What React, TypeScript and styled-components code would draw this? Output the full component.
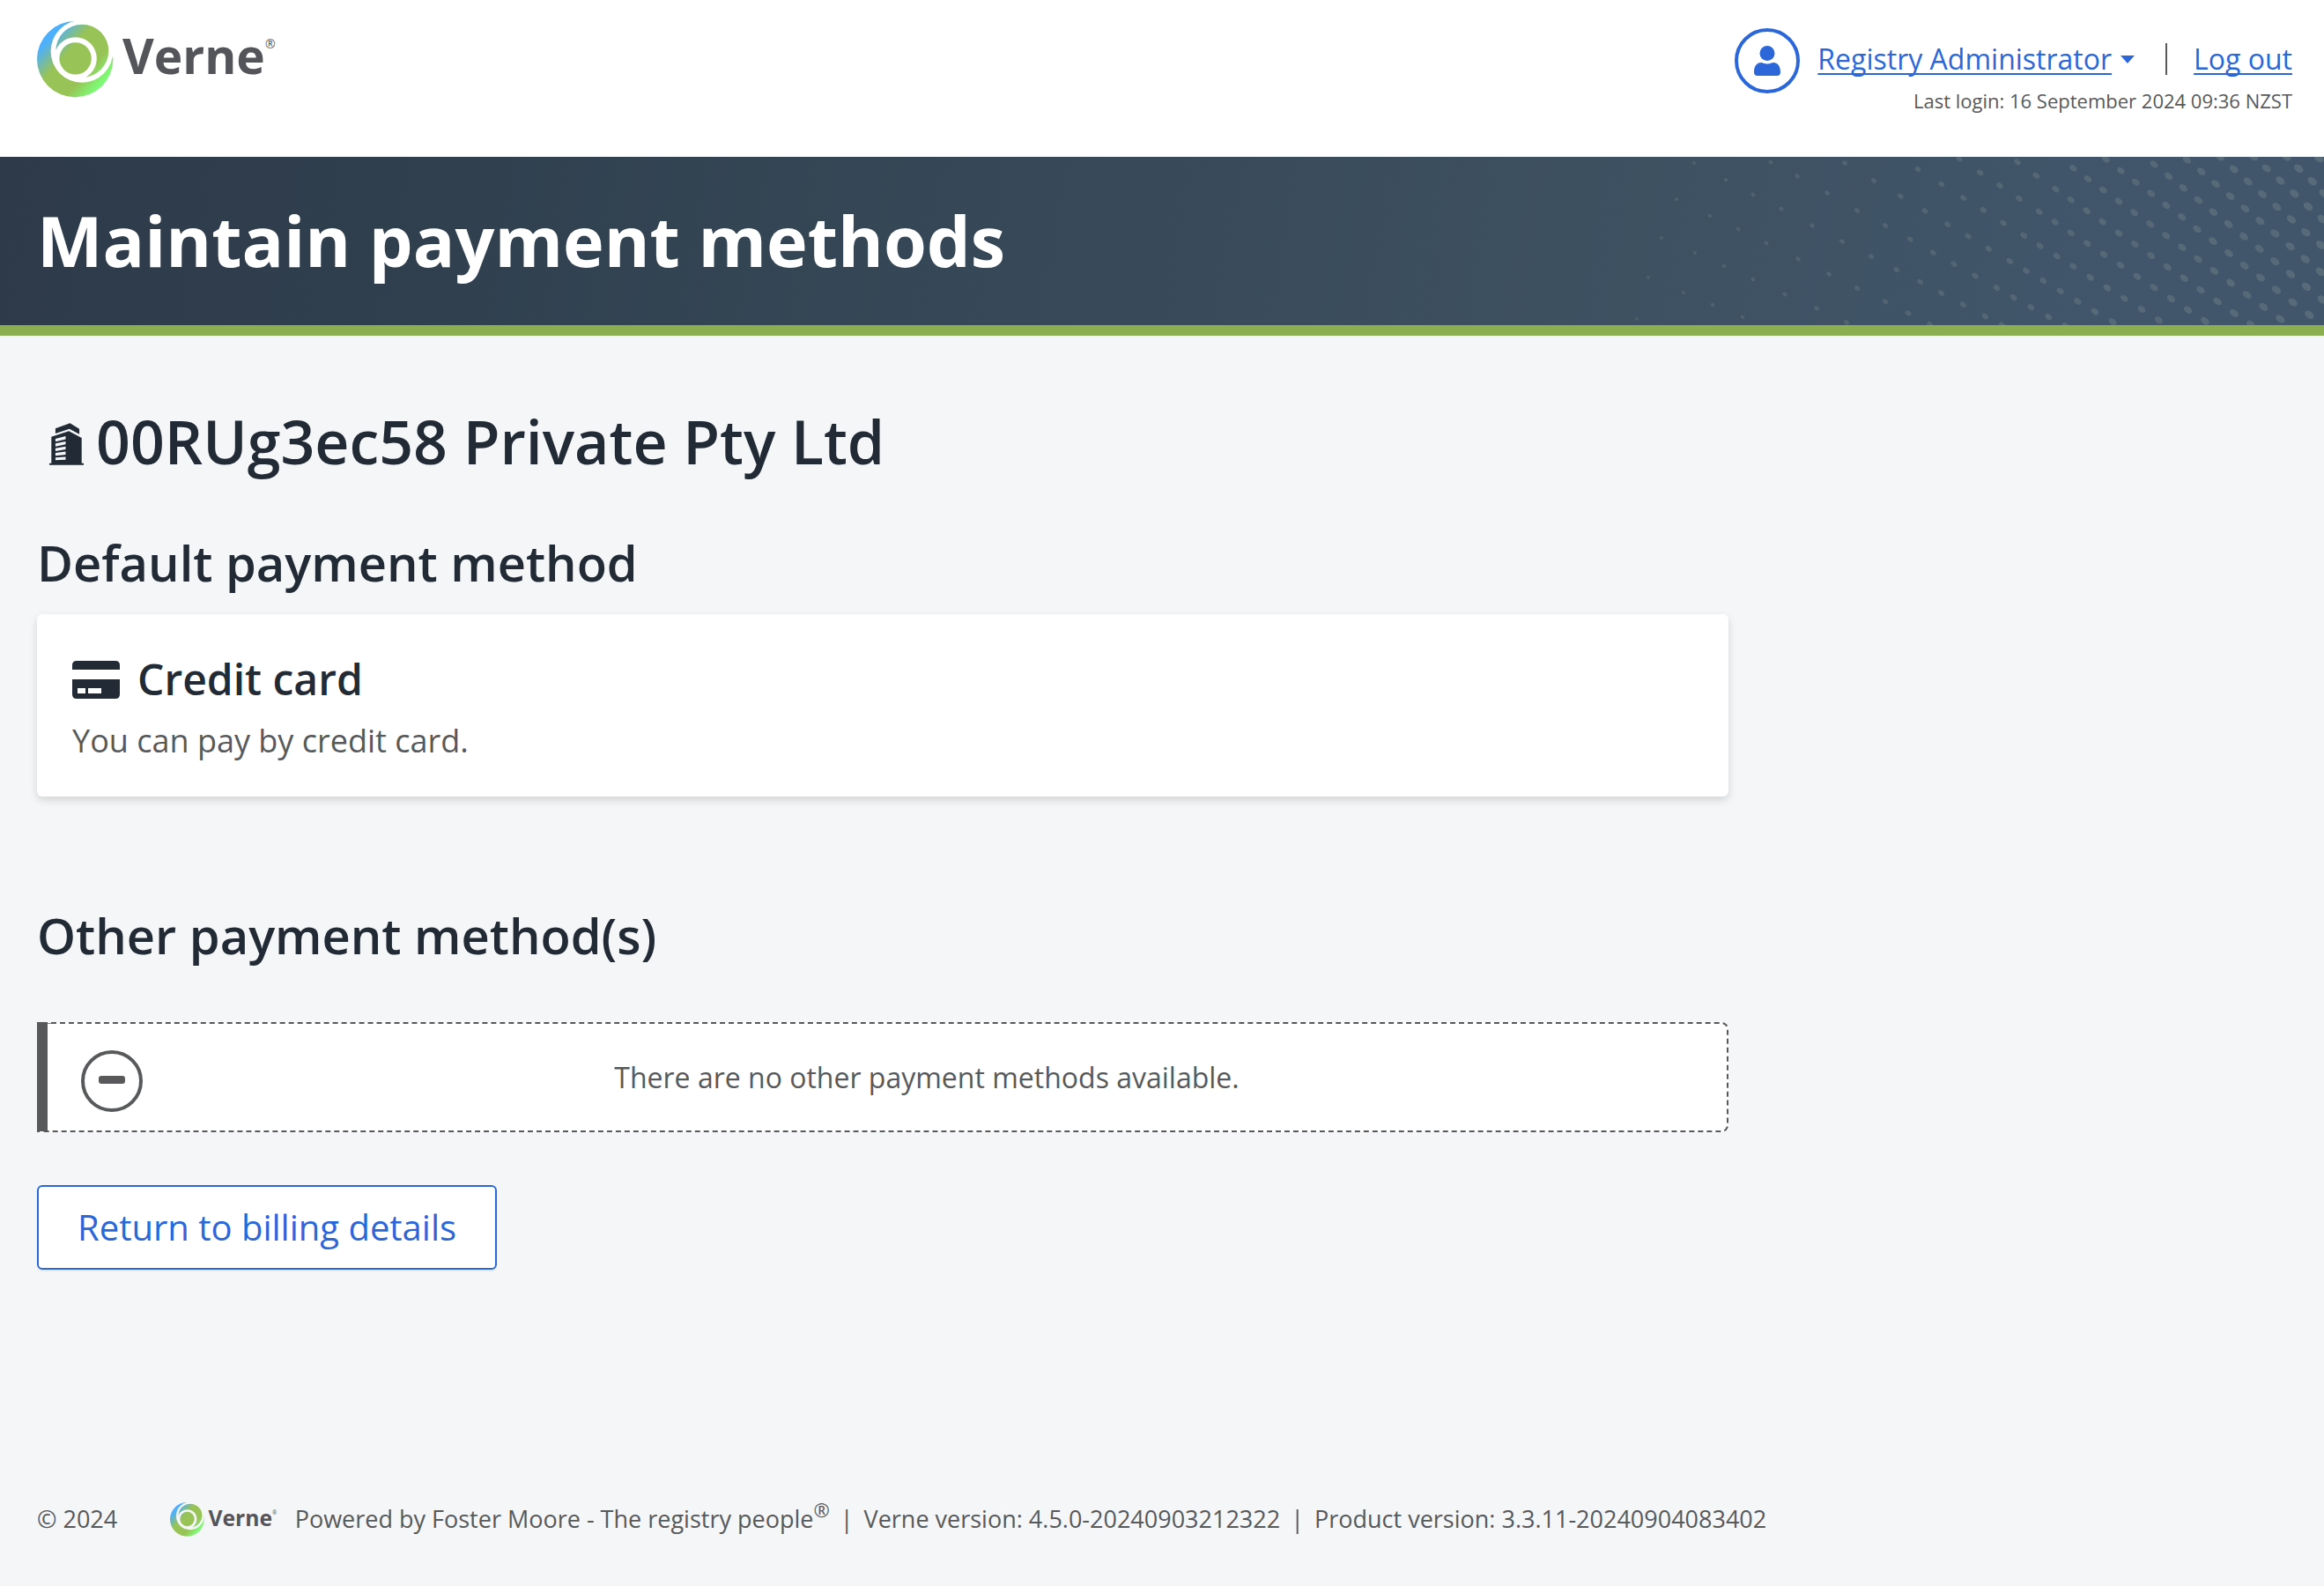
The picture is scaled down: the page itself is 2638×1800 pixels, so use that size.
import React, { useId } from "react";
import styled, { createGlobalStyle } from "styled-components";

const color = {
  ink: "#222b35",
  text: "#58595b",
  link: "#2b67d9",
  page: "#f4f6f8",
  accent: "#8aae50",
};

const GlobalStyle = createGlobalStyle`
  *, *::before, *::after { box-sizing: border-box; }
  body {
    margin: 0;
    background: ${color.page};
    color: ${color.text};
    font-family: "Open Sans", "Noto Sans", sans-serif;
  }
  h1, h2, h3, p { margin: 0; }
`;

const Page = styled.div`
  display: flex;
  flex-direction: column;
  min-height: 100vh;
`;

const Header = styled.header`
  display: flex;
  justify-content: space-between;
  align-items: flex-start;
  padding: 24px 36px 48px 42px;
  background: #fff;
`;

const LogoSvg = styled.svg<{ $height: number }>`
  display: block;
  height: ${(p) => p.$height}px;
  width: auto;
`;

const Account = styled.div`
  display: flex;
  align-items: flex-start;
  gap: 20px;
  padding-top: 8px;
`;

const Avatar = styled.span`
  display: grid;
  place-items: center;
  width: 74px;
  height: 74px;
  border: 4px solid ${color.link};
  border-radius: 50%;
`;

const AccountDetails = styled.div`
  display: flex;
  flex-direction: column;
  align-items: flex-end;
  gap: 6px;
  padding-top: 10px;
`;

const AccountLinks = styled.nav`
  display: flex;
  align-items: center;
  font-size: 32px;
  line-height: 50px;
`;

const UserMenu = styled.button`
  display: flex;
  align-items: center;
  gap: 10px;
  padding: 0;
  border: 0;
  background: none;
  color: ${color.link};
  font: inherit;
  cursor: pointer;
`;

const Underlined = styled.span`
  text-decoration: underline;
  text-decoration-thickness: 2px;
  text-underline-offset: 4px;
  text-decoration-skip-ink: none;
`;

const Caret = styled.span`
  border: 8px solid transparent;
  border-top: 9px solid currentColor;
  border-bottom: 0;
`;

const Separator = styled.span`
  width: 2px;
  height: 36px;
  margin: 0 30px 0 35px;
  background: ${color.text};
`;

const TextLink = styled.a`
  color: ${color.link};
  text-decoration: none;
`;

const LastLogin = styled.p`
  font-size: 22px;
  line-height: 32px;
`;

const Banner = styled.div`
  position: relative;
  padding: 41px 42px 42px;
  border-bottom: 12px solid ${color.accent};
  background: linear-gradient(100deg, #2e3a49 0%, #30404f 20%, #3d5060 66%, #41566b 92%);
  overflow: hidden;
`;

const BannerDots = styled.svg`
  position: absolute;
  top: 0;
  right: 0;
  height: 100%;
`;

const BannerTitle = styled.h1`
  position: relative;
  color: #fff;
  font-size: 79px;
  line-height: 108px;
  font-weight: 700;
`;

const Main = styled.main`
  flex: 1;
  padding: 72px 36px 0 42px;
`;

const Column = styled.div`
  width: 75%;
`;

const Company = styled.h2`
  display: flex;
  align-items: center;
  gap: 14px;
  padding-left: 14px;
  color: ${color.ink};
  font-size: 68px;
  line-height: 96px;
  font-weight: 600;

  svg {
    margin-top: 6px;
  }
`;

const Section = styled.section<{ $gapAbove: number; $gapInside: number }>`
  display: flex;
  flex-direction: column;
  gap: ${(p) => p.$gapInside}px;
  margin-top: ${(p) => p.$gapAbove}px;
`;

const SectionTitle = styled.h2`
  color: ${color.ink};
  font-size: 56px;
  line-height: 76px;
  font-weight: 600;
`;

const Card = styled.article`
  display: flex;
  flex-direction: column;
  gap: 14px;
  padding: 42px 40px 39px;
  border-radius: 6px;
  background: #fff;
  box-shadow: 0 4px 10px rgba(0, 0, 0, 0.14);
`;

const CardTitle = styled.h3`
  display: flex;
  align-items: center;
  gap: 20px;
  color: ${color.ink};
  font-size: 48px;
  line-height: 64px;
  font-weight: 600;
`;

const CardText = styled.p`
  font-size: 36px;
  line-height: 48px;
`;

const Notice = styled.div`
  display: flex;
  align-items: center;
  padding: 23px 18px 23px 38px;
  border: 2px dashed ${color.text};
  border-left: 12px solid ${color.text};
  border-radius: 0 8px 8px 0;
  background: #fff;
`;

const NoticeIcon = styled.span`
  display: grid;
  place-items: center;
  flex: none;
  width: 70px;
  height: 70px;
  margin: 7px 0 -2px;
  padding-bottom: 3px;
  border: 4px solid ${color.text};
  border-radius: 50%;

  &::before {
    content: "";
    width: 30px;
    height: 9px;
    border-radius: 3px;
    background: ${color.text};
  }
`;

const NoticeText = styled.p`
  flex: 1;
  text-align: center;
  font-size: 32px;
  line-height: 48px;
`;

const ReturnButton = styled.button`
  margin-top: 60px;
  padding: 18px 44px;
  border: 2px solid ${color.link};
  border-radius: 6px;
  background: #fff;
  box-shadow: 0 2px 2px rgba(0, 0, 0, 0.06);
  color: ${color.link};
  font: inherit;
  font-size: 40px;
  line-height: 56px;
  cursor: pointer;
`;

const Footer = styled.footer`
  display: flex;
  align-items: center;
  padding: 0 36px 56px 42px;
  font-size: 27px;
  line-height: 40px;
`;

const Copyright = styled.span`
  margin-right: 60px;
`;

const FooterText = styled.p`
  margin-left: 20px;

  sup {
    font-size: 22px;
    line-height: 0;
    vertical-align: 12px;
  }
`;

const Divider = styled.span`
  margin: 0 12px;
`;

function VerneLogo({ height }: { height: number }) {
  const id = useId();
  return (
    <LogoSvg $height={height} viewBox="0 0 271 87" role="img" aria-label="Verne">
      <defs>
        <linearGradient id={`${id}g`} gradientUnits="userSpaceOnUse" x1="8" y1="26" x2="66" y2="78">
          <stop offset="0" stopColor="#4cb0ff" />
          <stop offset="0.34" stopColor="#98c356" />
          <stop offset="0.74" stopColor="#98c356" />
          <stop offset="1" stopColor="#7dfb76" />
        </linearGradient>
        <mask id={`${id}m`} maskUnits="userSpaceOnUse" x="0" y="0" width="90" height="90">
          <rect width="90" height="90" fill="#fff" />
          <circle cx="51" cy="34.3" r="35.4" fill="#000" />
          <circle cx="51.3" cy="33.7" r="30" fill="#fff" />
          <circle cx="43.6" cy="42.4" r="24.2" fill="#000" />
          <circle cx="43.6" cy="42.4" r="18.2" fill="#fff" />
        </mask>
      </defs>
      <circle cx="43.2" cy="43.2" r="43.2" fill={`url(#${id}g)`} mask={`url(#${id}m)`} />
      <text x="97" y="60" fontFamily="Open Sans" fontWeight="700" fontSize="55" fill="#54555b">
        Verne
      </text>
      <text x="259" y="31" fontFamily="Open Sans" fontSize="14" fill="#54555b">
        ®
      </text>
    </LogoSvg>
  );
}

function UserIcon() {
  return (
    <svg width="30" height="36" viewBox="0 0 30 36" fill={color.link} aria-hidden="true">
      <circle cx="15" cy="9.5" r="8.5" />
      <path d="M8 20 C10 20 11.5 21.5 15 21.5 C18.5 21.5 20 20 22 20 C27 20 30 24 30 31 Q30 35 26 35 H4 Q0 35 0 31 C0 24 3 20 8 20 Z" />
    </svg>
  );
}

function BuildingIcon() {
  return (
    <svg width="39" height="48" viewBox="48 33 118 144" fill={color.ink} aria-hidden="true">
      <path d="M69 51 L119 33 L151 53 V71 L117 53 L69 69 Z" />
      <path
        fillRule="evenodd"
        d="M55 80 L115 60 L159 84 V171 H166 V177 H48 V171 H55 Z
           M69 87 V97 L104 88 V78 Z
           M69 103 V113 L104 106 V96 Z
           M69 119 V129 L104 123 V113 Z
           M69 135 V145 L104 141 V131 Z
           M69 151 V160 L104 159 V149 Z"
      />
    </svg>
  );
}

function CreditCardIcon() {
  return (
    <svg width="54" height="43" viewBox="0 0 54 43" fill={color.ink} aria-hidden="true">
      <path d="M5 0 H49 Q54 0 54 5 V10 H0 V5 Q0 0 5 0 Z" />
      <path
        fillRule="evenodd"
        d="M0 21 H54 V38 Q54 43 49 43 H5 Q0 43 0 38 Z M6 31 V37 H15 V31 Z M18 31 V37 H33 V31 Z"
      />
    </svg>
  );
}

// Dot centres of the banner pattern, one row for each diagonal strand.
const dotStrands: [number, number][][] = [
  [[549, 21], [657, 78], [750, 129], [846, 177], [951, 234], [1053, 288], [1152, 339]],
  [[810, 18], [900, 66], [1002, 123], [1104, 183]],
  [[1062, 21], [1161, 81]],
  [[489, 144], [603, 201], [699, 246], [795, 294], [903, 348], [1008, 399], [1104, 447]],
  [[438, 276], [552, 327], [651, 372], [750, 417], [858, 468], [966, 516], [1068, 564]],
  [[393, 411], [513, 462], [612, 504], [714, 546]],
  [[354, 552]],
  [[1311, 42], [1391, 93], [1466, 140], [1534, 181], [1602, 225], [1672, 268], [1727, 303], [1784, 338], [1840, 373], [1898, 410], [1956, 446], [2014, 482], [2073, 519], [2131, 556]],
  [[1452, 7], [1523, 54], [1590, 98], [1656, 142], [1724, 187], [1778, 222], [1832, 259], [1888, 295], [1944, 332], [2001, 369], [2058, 407], [2115, 445], [2173, 483], [2231, 521], [2289, 559]],
  [[1650, 18], [1714, 64], [1780, 110], [1832, 146], [1886, 184], [1940, 221], [1995, 260], [2050, 297], [2105, 336], [2161, 375], [2218, 413], [2274, 453], [2331, 492], [2388, 532], [2445, 571]],
  [[1252, 134], [1335, 184], [1412, 230], [1482, 270], [1552, 313], [1624, 355], [1680, 388], [1738, 422], [1796, 457], [1855, 492], [1914, 527], [1974, 562]],
  [[1200, 234], [1285, 281], [1363, 326], [1434, 365], [1506, 405], [1579, 446], [1637, 479], [1696, 512], [1756, 545], [1814, 575]],
  [[1238, 384], [1319, 426], [1391, 464], [1465, 503], [1540, 543], [1598, 573]],
  [[1200, 493], [1278, 532], [1352, 570]],
  [[1840, 38], [1890, 75], [1942, 113], [1995, 151], [2048, 190], [2102, 229], [2156, 268], [2211, 308], [2265, 348], [2320, 388], [2376, 429], [2432, 470], [2488, 511], [2545, 552]],
  [[1951, 8], [2002, 47], [2053, 86], [2105, 125], [2157, 165], [2210, 205], [2262, 246], [2316, 287], [2370, 328], [2423, 370], [2478, 411], [2532, 453], [2588, 495], [2644, 538]],
  [[2115, 25], [2165, 66], [2215, 106], [2266, 147], [2317, 188], [2369, 229], [2421, 271], [2474, 313], [2527, 356], [2580, 399], [2634, 442], [2688, 486]],
  [[2227, 10], [2276, 50], [2325, 92], [2375, 134], [2425, 176], [2476, 218], [2527, 261], [2579, 305], [2630, 348], [2682, 391]],
  [[2340, 0], [2387, 42], [2435, 84], [2484, 127], [2533, 170], [2583, 213], [2632, 257], [2683, 300]],
  [[2454, 0], [2498, 39], [2545, 81], [2593, 125], [2640, 169], [2688, 212]],
  [[2566, 0], [2608, 40], [2654, 83], [2694, 125]],
  [[2677, 5]],
];

function DotPattern() {
  return (
    <BannerDots viewBox="0 0 2694 573" aria-hidden="true">
      {dotStrands.flat().map(([x, y]) => {
        const t = x / 2694;
        return (
          <ellipse
            key={`${x}-${y}`}
            rx={4 + 14 * t}
            ry={4 + 8 * t}
            fill="#a3b0aa"
            opacity={0.15 + 0.08 * t}
            transform={`translate(${x} ${y}) rotate(38)`}
          />
        );
      })}
    </BannerDots>
  );
}

export default function App() {
  return (
    <>
      <GlobalStyle />
      <Page>
        <Header>
          <VerneLogo height={87} />
          <Account>
            <Avatar>
              <UserIcon />
            </Avatar>
            <AccountDetails>
              <AccountLinks>
                <UserMenu type="button">
                  <Underlined>Registry Administrator</Underlined>
                  <Caret />
                </UserMenu>
                <Separator />
                <TextLink href="#logout">
                  <Underlined>Log out</Underlined>
                </TextLink>
              </AccountLinks>
              <LastLogin>Last login: 16 September 2024 09:36 NZST</LastLogin>
            </AccountDetails>
          </Account>
        </Header>

        <Banner>
          <DotPattern />
          <BannerTitle>Maintain payment methods</BannerTitle>
        </Banner>

        <Main>
          <Column>
            <Company>
              <BuildingIcon />
              00RUg3ec58 Private Pty Ltd
            </Company>

            <Section $gapAbove={51} $gapInside={21}>
              <SectionTitle>Default payment method</SectionTitle>
              <Card>
                <CardTitle>
                  <CreditCardIcon />
                  Credit card
                </CardTitle>
                <CardText>You can pay by credit card.</CardText>
              </Card>
            </Section>

            <Section $gapAbove={119} $gapInside={61}>
              <SectionTitle>Other payment method(s)</SectionTitle>
              <Notice>
                <NoticeIcon />
                <NoticeText>There are no other payment methods available.</NoticeText>
              </Notice>
            </Section>

            <ReturnButton type="button">Return to billing details</ReturnButton>
          </Column>
        </Main>

        <Footer>
          <Copyright>© 2024</Copyright>
          <VerneLogo height={39} />
          <FooterText>
            Powered by Foster Moore - The registry people<sup>®</sup>
            <Divider>|</Divider>
            Verne version: 4.5.0-20240903212322
            <Divider>|</Divider>
            Product version: 3.3.11-20240904083402
          </FooterText>
        </Footer>
      </Page>
    </>
  );
}
